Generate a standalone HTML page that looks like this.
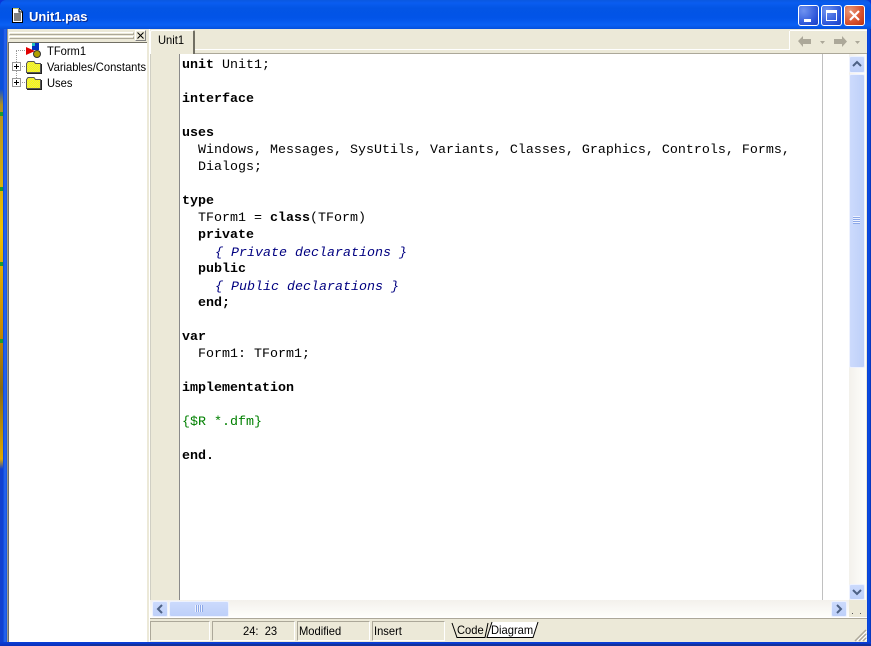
<!DOCTYPE html>
<html><head><meta charset="utf-8"><style>
html,body{margin:0;padding:0;width:871px;height:646px;overflow:hidden;background:#0a36d8}
div,svg,span{position:absolute;box-sizing:border-box}
.ui{font:12px "Liberation Sans",sans-serif;color:#000;white-space:pre;transform:scaleX(.93);transform-origin:0 0}
pre{position:absolute;margin:0;left:182px;top:57px;font:13.33px/17px "Liberation Mono",monospace;color:#000}
pre b{font-weight:bold}
pre i{position:relative;top:1px;left:1px;color:#000080;font-style:italic}
pre u{color:#008000;text-decoration:none}
.sb{background:linear-gradient(#ccdafc,#bed0f9);border:1px solid #eef2fe;border-radius:2px}
.st{top:621px;height:20px;border:1px solid;border-color:#aca899 #fff #fff #aca899;background:#ece9d8}
</style></head><body>
<!-- title bar -->
<div style="left:0;top:0;width:871px;height:29px;background:linear-gradient(#0a58e0 0,#0a5df0 3px,#0355e5 8px,#0254e8 18px,#0a60f4 25px,#0550dc 29px);border-radius:6px 6px 0 0"></div>
<!-- frame -->
<div style="left:0;top:29px;width:3px;height:440px;background:linear-gradient(#0a4fd8 0,#0a4fd8 60px,#b09020 76px,#f0c000 200px,#c98a00 300px,#8a6a10 360px,#e0a800 430px,#1040d0 440px)"></div>
<div style="left:0;top:112px;width:3px;height:4px;background:#1a9a30"></div>
<div style="left:0;top:187px;width:3px;height:4px;background:#1a9a30"></div>
<div style="left:0;top:262px;width:3px;height:4px;background:#1a9a30"></div>
<div style="left:0;top:339px;width:3px;height:4px;background:#1a9a30"></div>
<div style="left:0;top:469px;width:3px;height:177px;background:#1040d0"></div>
<div style="left:3px;top:29px;width:4px;height:617px;background:linear-gradient(90deg,#0a45d8,#2a68ee,#1150e0)"></div>
<div style="left:867px;top:29px;width:4px;height:617px;background:linear-gradient(90deg,#0a3fd0,#0a50e8,#0a30b0)"></div>
<div style="left:0;top:642px;width:871px;height:4px;background:linear-gradient(#0a3fd8,#0a2fb8)"></div>
<div style="left:90px;top:644px;width:781px;height:2px;background:#12309a"></div>
<!-- client -->
<div style="left:7px;top:29px;width:860px;height:613px;background:#ece9d8"></div>
<div style="left:7px;top:29px;width:1px;height:613px;background:#9a9a90"></div>

<!-- title icon/text -->
<svg style="left:12px;top:8px" width="12" height="15" viewBox="0 0 12 15"><path d="M.5.5H7L10.500 4V14.500H.5Z" fill="#fff" stroke="#000"/><path d="M7 .5V4H10.500" fill="#ffe" stroke="#000"/><path d="M2 6H9M2 8H9M2 10H9M2 12H9" stroke="#000"/><path d="M1 0H7V1H1Z" fill="#c8c860"/></svg>
<div style="left:29px;top:8px;font:bold 13px/17px 'Liberation Sans',sans-serif;color:#0a2a90;white-space:pre;transform:translate(1px,1px)">Unit1.pas</div>
<div style="left:29px;top:8px;font:bold 13px/17px 'Liberation Sans',sans-serif;color:#fff;white-space:pre">Unit1.pas</div>
<!-- window buttons -->
<div style="left:798px;top:5px;width:21px;height:21px;border:1px solid #fff;border-radius:3px;background:radial-gradient(circle at 25% 25%,#6f93f0,#2a54d8 70%,#1c3fc0)"></div>
<div style="left:804px;top:19px;width:7px;height:3px;background:#fff"></div>
<div style="left:821px;top:5px;width:21px;height:21px;border:1px solid #fff;border-radius:3px;background:radial-gradient(circle at 25% 25%,#6f93f0,#2a54d8 70%,#1c3fc0)"></div>
<div style="left:826px;top:10px;width:11px;height:11px;border:1px solid #fff;border-top-width:3px"></div>
<div style="left:844px;top:5px;width:21px;height:21px;border:1px solid #fff;border-radius:3px;background:radial-gradient(circle at 25% 25%,#e89878,#d8502c 60%,#b83210)"></div>
<svg style="left:844px;top:5px" width="21" height="21"><path d="M6 6L15 15M15 6L6 15" stroke="#fff" stroke-width="2.2"/></svg>

<!-- tree panel -->
<div style="left:9px;top:32px;width:125px;height:3px;border:1px solid;border-color:#fff #aca899 #aca899 #fff"></div>
<div style="left:9px;top:36px;width:125px;height:3px;border:1px solid;border-color:#fff #aca899 #aca899 #fff"></div>
<div style="left:135px;top:30px;width:11px;height:11px;border:1px solid;border-color:#fff #808080 #808080 #fff;background:#ece9d8"></div>
<svg style="left:137px;top:32px" width="7" height="7"><path d="M.5.5L6.500 6.500M6.500.5L.5 6.500" stroke="#000"/></svg>
<div style="left:8px;top:42px;width:139px;height:600px;background:#fff;border-top:1px solid #716f64;border-left:1px solid #716f64"></div>
<svg style="left:8px;top:42px" width="70" height="50">
<defs><pattern id="h" width="2" height="2" patternUnits="userSpaceOnUse"><rect width="2" height="2" fill="#ffff00"/><rect width="1" height="1" fill="#e4e460"/><rect x="1" y="1" width="1" height="1" fill="#e4e460"/></pattern></defs>
<path d="M8 8.500H18M8.500 9V40M12 24.500H18M12 40.500H18" stroke="#999" stroke-dasharray="1 1" fill="none"/>
<rect x="4.500" y="20.500" width="8" height="8" fill="#fff" stroke="#999"/><path d="M6 24.500H11M8.500 22V27" stroke="#000"/>
<rect x="4.500" y="36.500" width="8" height="8" fill="#fff" stroke="#999"/><path d="M6 40.500H11M8.500 38V43" stroke="#000"/>
<path d="M18.500 21.500L20 19.500H26L27.500 21.500H32.500V30.500H18.500Z" fill="url(#h)" stroke="#555"/><path d="M19 31.500H33.500V22" fill="none" stroke="#222"/>
<path d="M18.500 37.500L20 35.500H26L27.500 37.500H32.500V46.500H18.500Z" fill="url(#h)" stroke="#555"/><path d="M19 47.500H33.500V38" fill="none" stroke="#222"/>
<rect x="24" y="1" width="7" height="7" fill="#0030c0"/><rect x="24" y="1" width="3" height="3" fill="#20c0c0"/>
<path d="M18 5L27 9L18 13Z" fill="#e00000"/>
<circle cx="29" cy="12" r="3.500" fill="#b0a000" stroke="#333"/>
</svg>
<div class="ui" style="left:47px;top:43px;line-height:16px">TForm1</div>
<div class="ui" style="left:47px;top:59px;line-height:16px">Variables/Constants</div>
<div class="ui" style="left:47px;top:75px;line-height:16px">Uses</div>

<!-- divider -->
<div style="left:147px;top:29px;width:3px;height:613px;background:#ece9d8"></div>
<div style="left:149px;top:29px;width:1px;height:613px;background:#fff"></div>

<!-- tab bar -->
<div style="left:150px;top:29px;width:717px;height:25px;background:#ece9d8;border-bottom:1px solid #aca899"></div>
<div style="left:195px;top:49px;width:595px;height:1px;background:#fff"></div>
<div style="left:789px;top:31px;width:1px;height:19px;background:#fff"></div>
<div style="left:790px;top:30px;width:77px;height:1px;background:#fff"></div>
<div style="left:150px;top:30px;width:45px;height:24px;background:#ece9d8;border-top:1px solid #fff;border-left:1px solid #fff;border-right:2px solid #716f64;border-radius:2px 2px 0 0"></div>
<div class="ui" style="left:158px;top:32px;line-height:16px">Unit1</div>
<svg style="left:795px;top:33px" width="70" height="16" fill="#aca899"><path d="M3 8L8 3V6H16V11H8V14Z"/><path d="M25 8H30L27.500 11Z"/><path d="M47 6H39V11H47V14L52 8.500L47 3Z"/><path d="M60 8H65L62.500 11Z"/></svg>

<!-- editor -->
<div style="left:150px;top:54px;width:30px;height:546px;background:#ece9d8;border-right:1px solid #8a8a8a;border-left:1px solid #d0cfc4"></div>
<div style="left:180px;top:54px;width:669px;height:546px;background:#fff"></div>
<div style="left:822px;top:54px;width:1px;height:546px;background:#c0c0c0"></div>
<pre><b>unit</b> Unit1;

<b>interface</b>

<b>uses</b>
  Windows, Messages, SysUtils, Variants, Classes, Graphics, Controls, Forms,
  Dialogs;

<b>type</b>
  TForm1 = <b>class</b>(TForm)
  <b>private</b>
    <i>{ Private declarations }</i>
  <b>public</b>
    <i>{ Public declarations }</i>
  <b>end;</b>

<b>var</b>
  Form1: TForm1;

<b>implementation</b>

<u>{$R *.dfm}</u>

<b>end.</b></pre>

<!-- vertical scrollbar -->
<div style="left:849px;top:54px;width:17px;height:546px;background:linear-gradient(90deg,#f3f1ec,#fefefb)"></div>
<div class="sb" style="left:849px;top:56px;width:16px;height:17px"></div>
<svg style="left:849px;top:56px" width="16" height="17"><path d="M4 10L8 6L12 10" fill="none" stroke="#4d6185" stroke-width="2"/></svg>
<div class="sb" style="left:849px;top:74px;width:16px;height:294px;background:linear-gradient(90deg,#ccdafc,#bed0f9)"></div>
<svg style="left:852px;top:216px" width="10" height="9"><path d="M1 .5H8M1 2.500H8M1 4.500H8M1 6.500H8" stroke="#eef2fe"/><path d="M1 1.500H8M1 3.500H8M1 5.500H8M1 7.500H8" stroke="#8ca8e8"/></svg>
<div class="sb" style="left:849px;top:584px;width:16px;height:16px"></div>
<svg style="left:849px;top:584px" width="16" height="16"><path d="M4 6L8 10L12 6" fill="none" stroke="#4d6185" stroke-width="2"/></svg>

<!-- horizontal scrollbar -->
<div style="left:150px;top:600px;width:717px;height:17px;background:linear-gradient(#f3f1ec,#fefefb)"></div>
<div class="sb" style="left:152px;top:601px;width:16px;height:16px"></div>
<svg style="left:152px;top:601px" width="16" height="16"><path d="M10 4L6 8L10 12" fill="none" stroke="#4d6185" stroke-width="2"/></svg>
<div class="sb" style="left:169px;top:601px;width:60px;height:16px;background:linear-gradient(#ccdafc,#bed0f9)"></div>
<svg style="left:194px;top:604px" width="10" height="10"><path d="M1.500 1V8M3.500 1V8M5.500 1V8M7.500 1V8" stroke="#eef2fe"/><path d="M2.500 1V8M4.500 1V8M6.500 1V8M8.500 1V8" stroke="#8ca8e8"/></svg>
<div class="sb" style="left:831px;top:601px;width:16px;height:16px"></div>
<svg style="left:831px;top:601px" width="16" height="16"><path d="M6 4L10 8L6 12" fill="none" stroke="#4d6185" stroke-width="2"/></svg>
<div style="left:849px;top:600px;width:18px;height:18px;background:#ece9d8"></div>
<div style="left:852px;top:613px;width:1px;height:1px;background:#555"></div>
<div style="left:860px;top:613px;width:1px;height:1px;background:#555"></div>

<!-- status bar -->
<div style="left:150px;top:617px;width:717px;height:25px;background:#ece9d8;border-top:1px solid #fff"></div>
<div style="left:150px;top:618px;width:717px;height:1px;background:#aca899"></div>
<div class="st" style="left:150px;width:60px"></div>
<div class="st" style="left:212px;width:83px"></div>
<div class="st" style="left:297px;width:73px"></div>
<div class="st" style="left:372px;width:73px"></div>
<div class="ui" style="left:243px;top:623px;line-height:16px">24:  23</div>
<div class="ui" style="left:299px;top:623px;line-height:16px">Modified</div>
<div class="ui" style="left:374px;top:623px;line-height:16px">Insert</div>
<svg style="left:447px;top:620px" width="100" height="20"><path d="M40 17.500L45 2H91L86 17.500Z" fill="#fff"/><path d="M5 3L10 17.500H38L41 3M45 2L40 17.500H86L91 2" fill="none" stroke="#000"/></svg>
<div class="ui" style="left:457px;top:622px;line-height:16px">Code</div>
<div class="ui" style="left:491px;top:622px;line-height:16px">Diagram</div>
<!-- grip -->
<svg style="left:854px;top:628px" width="13" height="14"><path d="M12 2L1 13M12 6L5 13M12 10L9 13" stroke="#aca899" stroke-width="1.500"/><path d="M13 3L3 13M13 7L7 13M13 11L11 13" stroke="#fff"/></svg>
</body></html>
